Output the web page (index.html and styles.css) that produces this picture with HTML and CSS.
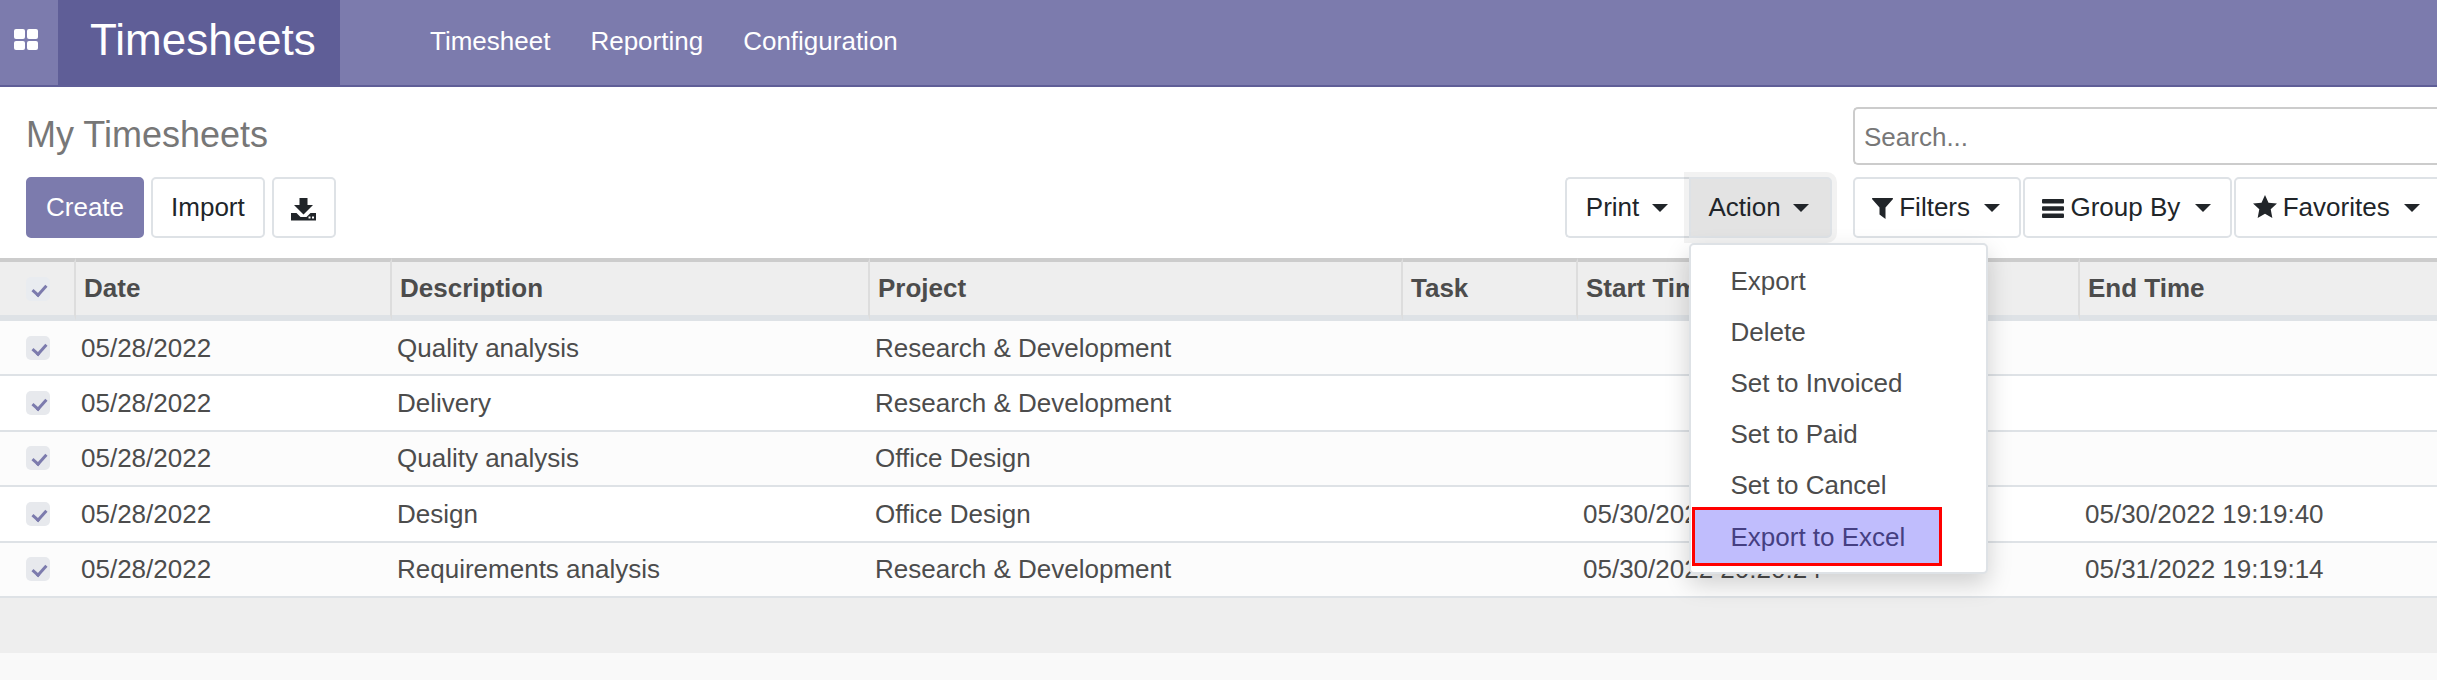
FILE: index.html
```html
<!doctype html>
<html lang="en">
<head>
    <meta http-equiv="Content-Type" content="text/html; charset=utf-8"/>
    <title>Timesheets</title>
    <link rel="stylesheet" href="styles.css">
</head>
<body>
<header class="navbar">
    <a class="apps">
        <svg width="24" height="21" viewBox="0 0 24 21"><rect x="0" y="0" width="11" height="10" rx="2"/><rect x="13" y="0" width="11" height="10" rx="2"/><rect x="0" y="12" width="11" height="9" rx="2"/><rect x="13" y="12" width="11" height="9" rx="2"/></svg>
    </a>
    <a class="brand">Timesheets</a>
    <nav class="menu">
        <a>Timesheet</a>
        <a>Reporting</a>
        <a>Configuration</a>
    </nav>
</header>

<section class="panel">
    <h1 class="title">My Timesheets</h1>
    <input class="search" type="text" placeholder="Search...">

    <div class="actions">
        <div class="main-btns">
            <button class="btn primary">Create</button>
            <button class="btn">Import</button>
            <button class="btn icon-btn">
                <svg width="25" height="23" viewBox="0 0 25 23"><path d="M8.500 0h8v7h5.500l-9.500 9.500L3 7h5.500z"/><path d="M0 15h5.500l4 4h6l4-4H25v7.500H0z"/><rect x="17.500" y="18.500" width="2" height="2" fill="#fff"/><rect x="21" y="18.500" width="2" height="2" fill="#fff"/></svg>
            </button>
        </div>
        <div class="sidebar-btns">
            <div class="dropdown-wrap">
                <button class="btn side-btn flat-right">Print <i class="caret"></i></button>
            </div>
            <div class="dropdown-wrap">
                <button class="btn side-btn flat-left open">Action <i class="caret"></i></button>
                <ul class="dropdown">
                    <li>Export</li>
                    <li>Delete</li>
                    <li>Set to Invoiced</li>
                    <li>Set to Paid</li>
                    <li>Set to Cancel</li>
                    <li class="selected">Export to Excel</li>
                </ul>
            </div>
        </div>
    </div>

    <div class="filters">
        <button class="btn">
            <svg class="ico" width="21" height="21" viewBox="0 0 21 21"><path d="M0.500 0h20q0.500 0 0.500 1L13.500 9.500V21L7.500 16.500V9.500L0 1q0-1 0.500-1z"/></svg>
            Filters <i class="caret"></i>
        </button>
        <button class="btn">
            <svg class="ico" width="22" height="19" viewBox="0 0 22 19"><rect y="0" width="22" height="4.500" rx="1"/><rect y="7.250" width="22" height="4.500" rx="1"/><rect y="14.500" width="22" height="4.500" rx="1"/></svg>
            Group By <i class="caret"></i>
        </button>
        <button class="btn">
            <svg class="ico star" width="24" height="23" viewBox="0 0 26 25"><path d="M13 0l3.800 8.300 9.200 1-6.800 6.100L21 25l-8-4.600L5 25l1.800-9.600L0 9.300l9.200-1z"/></svg>
            Favorites <i class="caret"></i>
        </button>
    </div>
</section>

<table class="list">
    <colgroup>
        <col class="c-check"><col class="c-date"><col class="c-desc"><col class="c-project"><col class="c-task"><col class="c-start"><col class="c-end">
    </colgroup>
    <thead>
        <tr>
            <th><span class="check"></span></th>
            <th>Date</th>
            <th>Description</th>
            <th>Project</th>
            <th>Task</th>
            <th>Start Time</th>
            <th>End Time</th>
        </tr>
    </thead>
    <tbody>
        <tr>
            <td><span class="check"></span></td>
            <td>05/28/2022</td>
            <td>Quality analysis</td>
            <td>Research &amp; Development</td>
            <td></td><td></td><td></td>
        </tr>
        <tr>
            <td><span class="check"></span></td>
            <td>05/28/2022</td>
            <td>Delivery</td>
            <td>Research &amp; Development</td>
            <td></td><td></td><td></td>
        </tr>
        <tr>
            <td><span class="check"></span></td>
            <td>05/28/2022</td>
            <td>Quality analysis</td>
            <td>Office Design</td>
            <td></td><td></td><td></td>
        </tr>
        <tr>
            <td><span class="check"></span></td>
            <td>05/28/2022</td>
            <td>Design</td>
            <td>Office Design</td>
            <td></td>
            <td>05/30/2022 19:19:40</td>
            <td>05/30/2022 19:19:40</td>
        </tr>
        <tr>
            <td><span class="check"></span></td>
            <td>05/28/2022</td>
            <td>Requirements analysis</td>
            <td>Research &amp; Development</td>
            <td></td>
            <td>05/30/2022 20:20:24</td>
            <td>05/31/2022 19:19:14</td>
        </tr>
    </tbody>
</table>
<div class="list-foot"></div>
</body>
</html>
```

FILE: styles.css
```css
* {
    box-sizing: border-box;
}

html, body {
    margin: 0;
    padding: 0;
    overflow: hidden;
}

body {
    height: 680px;
    background: #f9f9f9;
    font: 26px/1.5 "Liberation Sans", Arial, sans-serif;
    color: #4c4c4c;
}

/* top bar */
.navbar {
    display: flex;
    height: 87px;
    background: #7c7bad;
    border-bottom: 2px solid #5f5e97;
    color: #fff;
}

.apps {
    width: 58px;
    display: flex;
    align-items: center;
    justify-content: center;
    padding: 0 6px 6px 0;
}

.apps svg {
    fill: #fff;
}

.brand {
    width: 282px;
    background: #5f5e97;
    padding-left: 32px;
    font-size: 44px;
    line-height: 80px;
}

.menu {
    display: flex;
    gap: 40px;
    padding-left: 90px;
    line-height: 83px;
}

/* control panel */
.panel {
    display: grid;
    grid-template-columns: 1853px 1fr;
    grid-template-rows: 58px 61px;
    row-gap: 12px;
    height: 171px;
    padding-top: 20px;
    background: #fff;
}

.title {
    margin: 0;
    padding-left: 26px;
    font-size: 36px;
    font-weight: 400;
    line-height: 55px;
    color: #777;
}

.search {
    width: 100%;
    height: 58px;
    border: 2px solid #ccc;
    border-right: 0;
    border-radius: 5px 0 0 5px;
    padding: 2px 10px 0 9px;
    font: inherit;
    outline: none;
}

.search::placeholder {
    color: #777;
}

.actions {
    display: flex;
    justify-content: space-between;
    padding: 0 21px 0 26px;
}

.main-btns {
    display: flex;
    gap: 7px;
}

.sidebar-btns {
    display: flex;
}

.filters {
    display: flex;
    gap: 2px;
}

.btn {
    height: 61px;
    padding: 0 18px;
    border: 2px solid #dee2e6;
    border-radius: 5px;
    background: #fff;
    color: #212529;
    font: inherit;
    white-space: nowrap;
}

.btn.primary {
    background: #7c7bad;
    border-color: #7c7bad;
    color: #fff;
}

.btn.icon-btn {
    padding: 0 17.500px;
}

.btn svg {
    fill: #212529;
    vertical-align: middle;
}

.filters .btn {
    padding: 0 19px 0 17px;
}

.btn .ico {
    margin-right: -1px;
    position: relative;
    top: -1px;
}

.btn .star {
    top: -3px;
}

.side-btn {
    padding: 0 21px 0 19px;
}

.side-btn .caret {
    margin-left: 5px;
}

.side-btn.flat-left {
    padding-left: 18px;
}

.flat-right {
    border-right: 0;
    border-radius: 5px 0 0 5px;
}

.flat-left {
    border-radius: 0 5px 5px 0;
}

.btn.open {
    background: #e3e3e3;
    box-shadow: 0 0 0 5px rgba(0, 0, 0, 0.05);
    position: relative;
}

.caret {
    display: inline-block;
    margin-left: 7px;
    vertical-align: 4px;
    border-top: 8px solid #212529;
    border-left: 8px solid transparent;
    border-right: 8px solid transparent;
}

/* action menu */
.dropdown-wrap {
    position: relative;
}

.dropdown {
    position: absolute;
    left: 0;
    top: 66px;
    z-index: 10;
    width: 299px;
    height: 331px;
    margin: 0;
    padding: 11px 0 0 0;
    list-style: none;
    background: #fff;
    border: 2px solid #dee2e6;
    border-radius: 5px;
    box-shadow: 0 10px 24px rgba(0, 0, 0, 0.175);
}

.dropdown li {
    height: 51px;
    padding-left: 40px;
    line-height: 50px;
    white-space: nowrap;
}

.dropdown li.selected {
    width: 250px;
    height: 59px;
    margin: -4px 0 0 1px;
    padding-left: 36px;
    line-height: 54px;
    background: #c0bdfd;
    border: 3px solid #f00;
    color: #453f82;
}

/* list view */
.list {
    width: 2437px;
    table-layout: fixed;
    border-collapse: separate;
    border-spacing: 0;
    background: #fff;
}

.c-check { width: 76px; }
.c-date { width: 316px; }
.c-desc { width: 478px; }
.c-project { width: 533px; }
.c-task { width: 175px; }
.c-start { width: 502px; }

.list th {
    height: 63px;
    padding: 0 0 0 8px;
    background: #eee;
    border-top: 4px solid #ccc;
    border-bottom: 6px solid #dee2e6;
    border-right: 2px solid #ddd;
    text-align: left;
    font-weight: 700;
    white-space: nowrap;
    overflow: hidden;
}

.list th:last-child {
    border-right: 0;
}

.list th:first-child, .list td:first-child {
    padding: 0 0 0 26px;
}

.list td {
    height: 55.400px;
    padding: 1px 0 0 5px;
    border-bottom: 2px solid #dee2e6;
    white-space: nowrap;
    overflow: hidden;
}

.list tbody tr:nth-child(odd) {
    background: #fcfcfc;
}

.check {
    display: block;
    width: 24px;
    height: 24px;
    border-radius: 5px;
    background: #e7e9ed;
    position: relative;
}

.list th .check {
    background: #e9ecf0;
}

.check::after {
    content: "";
    position: absolute;
    left: 9px;
    top: 5px;
    width: 6px;
    height: 11px;
    border: solid #7c7bad;
    border-width: 0 3.500px 3.500px 0;
    transform: rotate(42deg);
}

.list-foot {
    height: 55px;
    background: #eee;
}
```
